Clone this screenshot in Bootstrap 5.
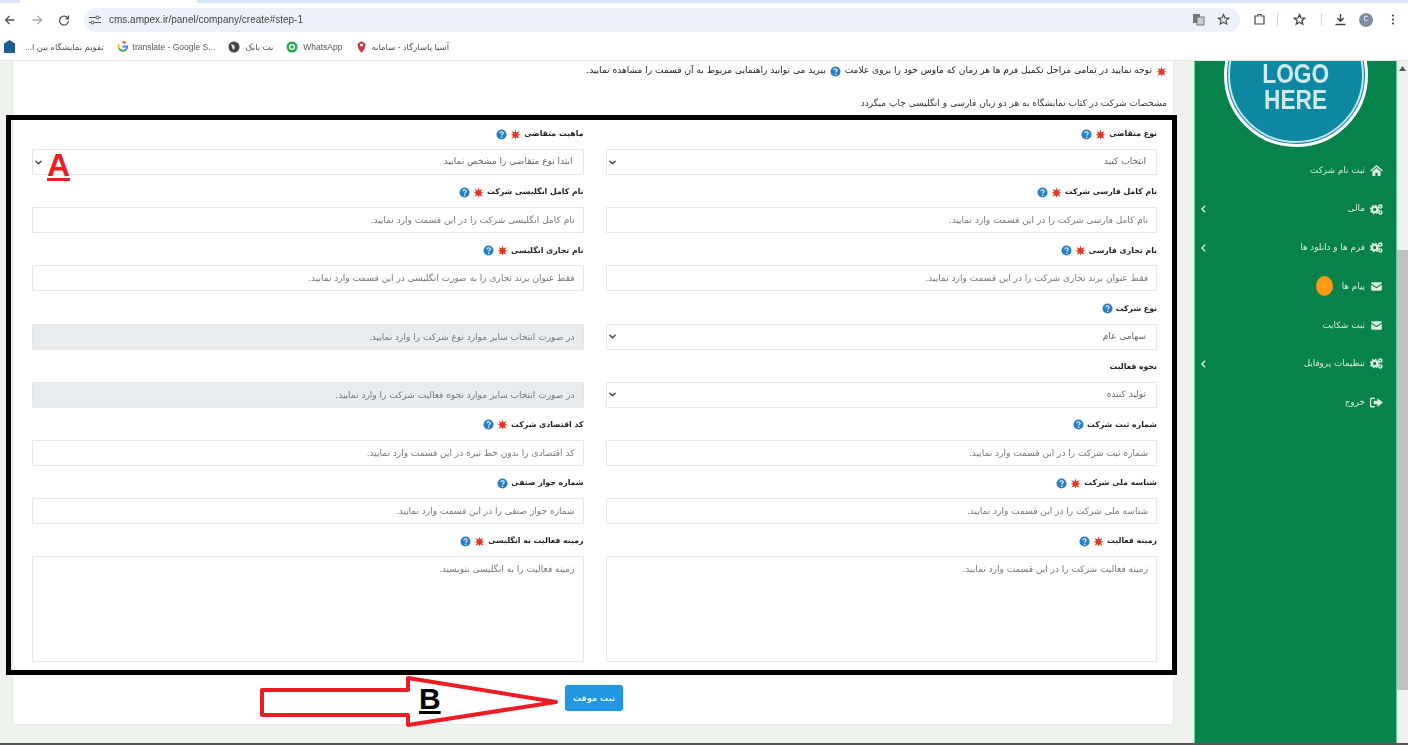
<!DOCTYPE html>
<html lang="fa">
<head>
<meta charset="utf-8">
<title>cms.ampex.ir</title>
<link href="https://cdn.jsdelivr.net/npm/bootstrap@5.3.0/dist/css/bootstrap.min.css" rel="stylesheet">
<style>
html,body{height:745px;overflow:hidden;background:#fff}
body{font-family:"DejaVu Sans","Noto Sans",sans-serif;font-size:9px;position:relative}
.tabstrip{height:3px;margin-bottom:3px;background:#d6e4f8}
.tab-white{width:177px;margin-left:20px;height:3px;background:#fff}
.toolbar{height:27px;padding:0 0 0 4px;background:#fff;color:#555;gap:15px}
.urlbar{flex:none;height:24px;width:1156px;border-radius:12px;background:#edf2fa;margin-left:-1px;padding:0 10px 0 5px;font:10px "Liberation Sans",sans-serif;color:#444}
.toolsep{width:1px;height:13px;background:#d5d5d5}
.bmbar{height:28px;background:#fff;border-bottom:1px solid #e6e6e6;padding:0 4px;font:8.5px "Liberation Sans","DejaVu Sans",sans-serif;color:#555;gap:13px}
.bmitem{gap:5px;white-space:nowrap}
.bmitem:first-child{gap:10px}
.shell{height:684px;background:#eff3ee}
.mainarea{width:1194px;padding-left:12px;padding-right:20px;height:684px}
.sheet{background:#fff;border:1px solid #e8e8e8;border-top:0;height:664px;padding:0 16px 0 19px}
.note1{height:20px;margin-right:-10px;color:#222;font-size:9.05px;white-space:nowrap;overflow:hidden}
.note2{height:45px;margin-right:-10px;color:#333;font-size:9px;padding-top:16px}
.formgrid{--bs-gutter-x:22px;--bs-gutter-y:0}
.fieldbox{height:58.2px}
.fieldbox.tall{height:134px}
.fieldlabel{height:23px;gap:3px;margin:0;padding-bottom:7px;font-weight:700;font-size:7.8px;color:#222}
.fieldctl.form-control,.fieldctl.form-select{height:26px;min-height:26px;border-radius:1px;border:1px solid #e6e6e6;font-size:9px;padding:0 8px;color:#666;text-align:right;background-color:#fff}
.fieldctl.form-control::placeholder{color:#777;opacity:1}
.fieldctl.form-select{--bs-form-select-bg-img:url("data:image/svg+xml,%3csvg xmlns='http://www.w3.org/2000/svg' viewBox='0 0 16 16'%3e%3cpath fill='none' stroke='%23444' stroke-linecap='round' stroke-linejoin='round' stroke-width='3.2' d='m2 5 6 6 6-6'/%3e%3c/svg%3e");background-position:left 1px center;background-size:9px 7px;padding-right:10px}
.fieldctl.form-control:disabled{background:#e9ecef}
textarea.fieldctl.form-control{height:106px;padding-top:6px;resize:none}
.savebtn.btn{width:58px;height:26px;padding:0;font-size:8.2px;font-weight:700;border-radius:3px;background:#2196e3;border:1px solid #2196e3;color:#e8f4fd;margin:18px 0 0 0;box-shadow:0 0 2px #9fc9ea}
.savewrap{padding-right:534px}
.greenside{width:203px;height:684px;background:#07824a;overflow:hidden;border-left:1px solid #5fd09a;border-right:1px solid #5fd09a}
.logocircle{width:144px;height:144px;margin:-58px auto 0;padding-top:24px;border-radius:50%;background:#0e87a3;border:3px solid #fff;outline:2px solid #bfe6ea;outline-offset:-6px;color:#cfe9ee;font:700 27px/26px "Liberation Sans",sans-serif;text-align:center}
.logoword{display:inline-block;transform:scaleX(.84)}
.menulist{padding:4px 13px 0 6px;margin:0;list-style:none;color:#d4ecdf;font-size:8.8px}
.menuline{height:38.7px;gap:5px}
.ordot{width:17px;height:20px;border-radius:50%;background:#f89a12;color:#fff;font-size:7px;margin-right:4px}
.scrolltrack{width:11px;height:684px;background:#f1f1f1;padding-top:5px}
.scrollup{display:block;margin:0 auto}
.scrollthumb{height:440px;margin-top:179px;background:#c1c1c1}
.softpic{filter:blur(.35px)}
.overlaybox{position:absolute;left:6px;top:115px;width:1171px;height:560px;border:5px solid #000;pointer-events:none}
.tag-a{position:absolute;left:47px;top:146px;font:700 32px/38px "Liberation Sans",sans-serif;color:#ed1c24;text-decoration:underline}
.tag-b{position:absolute;left:419px;top:681px;font:700 30px/36px "Liberation Sans",sans-serif;color:#000;text-decoration:underline}
.arrowlay{position:absolute;left:0;top:0;pointer-events:none}
.bottomline{position:absolute;left:0;right:0;bottom:0;height:2px;background:#555}
</style>
</head>
<body>
<svg width="0" height="0" class="d-none">
<symbol id="ic-star" viewBox="0 0 12 12"><path d="M6 .5l1 3.400 3.400-1.600-1.900 3.200 3 .9-3 1 1.900 3.200L7 9l-1 2.500L5 9l-3.400 1.600L3.500 7.400l-3-1 3-.9L1.600 2.300 5 3.900z" fill="#e5341f"/></symbol>
<symbol id="ic-help" viewBox="0 0 12 12"><circle cx="6" cy="6" r="5.500" fill="#2a7fc4"/><path d="M4.200 4.600C4.300 3.500 5 3 6 3s1.800.6 1.800 1.500c0 1.300-1.500 1.300-1.500 2.700" fill="none" stroke="#fff" stroke-width="1.200"/><circle cx="6.200" cy="9" r=".8" fill="#fff"/></symbol>
<symbol id="ic-home" viewBox="0 0 14 12"><path d="M7 0l7 6-1 1-6-5-6 5-1-1zM2.500 7L7 3.200 11.500 7v5H8.300V8.500H5.700V12H2.500z" fill="#dcefe5"/></symbol>
<symbol id="ic-cogs" viewBox="0 0 14 12"><circle cx="5" cy="6" r="3" fill="none" stroke="#dcefe5" stroke-width="2.400"/><circle cx="5" cy="6" r="4.600" fill="none" stroke="#dcefe5" stroke-width="1.300" stroke-dasharray="1.800 1.800"/><circle cx="11.200" cy="2.800" r="1.700" fill="none" stroke="#dcefe5" stroke-width="1.600"/><circle cx="11.200" cy="9.200" r="1.700" fill="none" stroke="#dcefe5" stroke-width="1.600"/></symbol>
<symbol id="ic-mail" viewBox="-1.500 -1 17 13"><path d="M0 1.500C0 .7.700 0 1.500 0h11c.8 0 1.500.7 1.500 1.500L7 6zM0 3.200l7 4.500 7-4.500v6.300c0 .8-.7 1.500-1.500 1.500h-11C.7 11 0 10.300 0 9.500z" fill="#dcefe5"/></symbol>
<symbol id="ic-exit" viewBox="0 0 14 11"><path d="M5 1H2a1.500 1.500 0 0 0-1.500 1.500v6A1.500 1.500 0 0 0 2 10h3" fill="none" stroke="#dcefe5" stroke-width="1.600"/><path d="M8 1l6 4.500L8 10V7.500H4v-4h4z" fill="#dcefe5"/></symbol>
<symbol id="ic-left" viewBox="0 0 6 10"><path d="M5 1L1 5l4 4" fill="none" stroke="#dcefe5" stroke-width="1.800"/></symbol>
</svg>

<div class="tabstrip"><div class="tab-white"></div></div>
<div class="toolbar softpic d-flex align-items-center">
<svg width="12" height="12" viewBox="0 0 12 12"><path d="M10.500 6H2M5.500 2L1.500 6l4 4" fill="none" stroke="#555" stroke-width="1.300"/></svg>
<svg width="12" height="12" viewBox="0 0 12 12"><path d="M1.500 6H10M6.500 2l4 4-4 4" fill="none" stroke="#aaa" stroke-width="1.300"/></svg>
<svg width="12" height="12" viewBox="0 0 12 12"><path d="M10 4.500A4.500 4.500 0 1 0 10.500 7M10.500 1.500v3.300H7.200" fill="none" stroke="#555" stroke-width="1.300"/></svg>
<div class="urlbar d-flex align-items-center">
<svg width="12" height="10" viewBox="0 0 12 10"><path d="M0 2.500h7M10 2.500h2M0 7.500h2M5 7.500h7" stroke="#555" stroke-width="1.200"/><circle cx="8.500" cy="2.500" r="1.500" fill="none" stroke="#555"/><circle cx="3.500" cy="7.500" r="1.500" fill="none" stroke="#555"/></svg>
<span class="ms-2">cms.ampex.ir/panel/company/create#step-1</span>
<svg class="ms-auto" width="13" height="13" viewBox="0 0 13 13"><rect x="1" y="1" width="7" height="9" fill="#777"/><rect x="5" y="4" width="7" height="8" fill="#c8ccd2" stroke="#777"/></svg>
<svg style="margin-left:12px" width="13" height="13" viewBox="0 0 13 13"><path d="M6.500 1.500l1.500 3.400 3.700.3-2.800 2.400.9 3.600-3.300-1.900-3.300 1.900.9-3.600L1.300 5.200l3.700-.3z" fill="none" stroke="#444" stroke-width="1.100"/></svg>
</div>
<svg style="margin-left:-2px" width="13" height="13" viewBox="0 0 13 13"><path d="M2 3h3V1.500h3V3h3v8H2z" fill="none" stroke="#444" stroke-width="1.200"/></svg>
<span class="toolsep" style="margin-left:-4px"></span>
<svg width="13" height="13" viewBox="0 0 13 13"><path d="M6.500 1.500l1.500 3.400 3.700.3-2.800 2.400.9 3.600-3.300-1.900-3.300 1.900.9-3.600L1.300 5.200l3.700-.3z" fill="none" stroke="#444" stroke-width="1.300"/></svg>
<span class="toolsep"></span>
<svg style="margin-left:-3px" width="13" height="13" viewBox="0 0 13 13"><path d="M6.500 1v7M3.300 5l3.200 3.200L9.700 5M1.500 11.500h10" fill="none" stroke="#444" stroke-width="1.400"/></svg>
<span class="rounded-circle d-flex align-items-center justify-content-center text-white" style="width:14px;height:14px;margin-left:-3px;background:#7d8fa3;font-size:7px">C</span>
<svg width="10" height="13" viewBox="0 0 10 13"><circle cx="5" cy="2.500" r="1.100" fill="#444"/><circle cx="5" cy="6.500" r="1.100" fill="#444"/><circle cx="5" cy="10.500" r="1.100" fill="#444"/></svg>
</div>
<div class="bmbar softpic d-flex align-items-center" dir="ltr">
<span class="bmitem d-flex align-items-center"><svg width="11" height="13" viewBox="0 0 11 13"><path d="M5.500 0L11 3.500V13H0V3.500z" fill="#1c5f96"/></svg><span dir="rtl">تقویم نمایشگاه بین ا...</span></span>
<span class="bmitem d-flex align-items-center"><svg width="11" height="11" viewBox="0 0 11 11"><path d="M5.500 1a4.500 4.500 0 0 1 3 1.200" fill="none" stroke="#ea4335" stroke-width="2"/><path d="M2 3.500A4.500 4.500 0 0 0 2 7.500" fill="none" stroke="#fbbc05" stroke-width="2"/><path d="M2 7.500a4.500 4.500 0 0 0 7 1" fill="none" stroke="#34a853" stroke-width="2"/><path d="M5.500 5.500H10A4.500 4.500 0 0 1 9 8.500" fill="none" stroke="#4285f4" stroke-width="2"/></svg><span>translate - Google S...</span></span>
<span class="bmitem d-flex align-items-center"><svg width="12" height="12" viewBox="0 0 12 12"><circle cx="6" cy="6" r="5.500" fill="#444"/><path d="M3 3l3 1 1 3-2 2-1-3z" fill="#ddd"/></svg><span dir="rtl">نت بانک</span></span>
<span class="bmitem d-flex align-items-center"><svg width="12" height="12" viewBox="0 0 12 12"><circle cx="6" cy="6" r="5.500" fill="#1fae4e"/><circle cx="6" cy="6" r="3" fill="#fff"/><circle cx="6" cy="6" r="1.700" fill="#1fae4e"/></svg><span>WhatsApp</span></span>
<span class="bmitem d-flex align-items-center"><svg width="11" height="12" viewBox="0 0 11 12"><path d="M5.500 0l4 3-1 5-3 4-3-4-1-5z" fill="#d2323a"/><circle cx="5.500" cy="4" r="1.500" fill="#fff"/></svg><span dir="rtl">آسیا پاسارگاد - سامانه</span></span>
</div>

<div class="shell d-flex">
<div class="mainarea">
<div class="sheet softpic" dir="rtl">
<div class="note1 d-flex align-items-center gap-1"><svg width="11" height="11"><use href="#ic-star"/></svg><span>توجه نمایید در تمامی مراحل تکمیل فرم ها هر زمان که ماوس خود را بروی علامت</span><svg width="11" height="11"><use href="#ic-help"/></svg><span>ببرید می توانید راهنمایی مربوط به آن قسمت را مشاهده نمایید.</span></div>
<div class="note2">مشخصات شرکت در کتاب نمایشگاه به هر دو زبان فارسی و انگلیسی چاپ میگردد</div>
<div class="row formgrid">
<div class="col-6 fieldbox"><label class="fieldlabel d-flex align-items-center">نوع متقاضی <svg width="11" height="11"><use href="#ic-star"/></svg><svg width="11" height="11"><use href="#ic-help"/></svg></label><select class="form-select fieldctl"><option>انتخاب کنید</option></select></div>
<div class="col-6 fieldbox"><label class="fieldlabel d-flex align-items-center">ماهیت متقاضی <svg width="11" height="11"><use href="#ic-star"/></svg><svg width="11" height="11"><use href="#ic-help"/></svg></label><select class="form-select fieldctl"><option>ابتدا نوع متقاضی را مشخص نمایید</option></select></div>

<div class="col-6 fieldbox"><label class="fieldlabel d-flex align-items-center">نام کامل فارسی شرکت <svg width="11" height="11"><use href="#ic-star"/></svg><svg width="11" height="11"><use href="#ic-help"/></svg></label><input class="form-control fieldctl" placeholder="نام کامل فارسی شرکت را در این قسمت وارد نمایید."></div>
<div class="col-6 fieldbox"><label class="fieldlabel d-flex align-items-center">نام کامل انگلیسی شرکت <svg width="11" height="11"><use href="#ic-star"/></svg><svg width="11" height="11"><use href="#ic-help"/></svg></label><input class="form-control fieldctl" placeholder="نام کامل انگلیسی شرکت را در این قسمت وارد نمایید."></div>

<div class="col-6 fieldbox"><label class="fieldlabel d-flex align-items-center">نام تجاری فارسی <svg width="11" height="11"><use href="#ic-star"/></svg><svg width="11" height="11"><use href="#ic-help"/></svg></label><input class="form-control fieldctl" placeholder="فقط عنوان برند تجاری شرکت را در این قسمت وارد نمایید."></div>
<div class="col-6 fieldbox"><label class="fieldlabel d-flex align-items-center">نام تجاری انگلیسی <svg width="11" height="11"><use href="#ic-star"/></svg><svg width="11" height="11"><use href="#ic-help"/></svg></label><input class="form-control fieldctl" placeholder="فقط عنوان برند تجاری را به صورت انگلیسی در این قسمت وارد نمایید."></div>

<div class="col-6 fieldbox"><label class="fieldlabel d-flex align-items-center">نوع شرکت <svg width="11" height="11"><use href="#ic-help"/></svg></label><select class="form-select fieldctl"><option>سهامی عام</option></select></div>
<div class="col-6 fieldbox"><div class="fieldlabel"></div><input class="form-control fieldctl" disabled placeholder="در صورت انتخاب سایر موارد نوع شرکت را وارد نمایید."></div>

<div class="col-6 fieldbox"><label class="fieldlabel d-flex align-items-center">نحوه فعالیت</label><select class="form-select fieldctl"><option>تولید کننده</option></select></div>
<div class="col-6 fieldbox"><div class="fieldlabel"></div><input class="form-control fieldctl" disabled placeholder="در صورت انتخاب سایر موارد نحوه فعالیت شرکت را وارد نمایید."></div>

<div class="col-6 fieldbox"><label class="fieldlabel d-flex align-items-center">شماره ثبت شرکت <svg width="11" height="11"><use href="#ic-help"/></svg></label><input class="form-control fieldctl" placeholder="شماره ثبت شرکت را در این قسمت وارد نمایید."></div>
<div class="col-6 fieldbox"><label class="fieldlabel d-flex align-items-center">کد اقتصادی شرکت <svg width="11" height="11"><use href="#ic-star"/></svg><svg width="11" height="11"><use href="#ic-help"/></svg></label><input class="form-control fieldctl" placeholder="کد اقتصادی را بدون خط تیره در این قسمت وارد نمایید."></div>

<div class="col-6 fieldbox"><label class="fieldlabel d-flex align-items-center">شناسه ملی شرکت <svg width="11" height="11"><use href="#ic-star"/></svg><svg width="11" height="11"><use href="#ic-help"/></svg></label><input class="form-control fieldctl" placeholder="شناسه ملی شرکت را در این قسمت وارد نمایید."></div>
<div class="col-6 fieldbox"><label class="fieldlabel d-flex align-items-center">شماره جواز صنفی <svg width="11" height="11"><use href="#ic-help"/></svg></label><input class="form-control fieldctl" placeholder="شماره جواز صنفی را در این قسمت وارد نمایید."></div>

<div class="col-6 fieldbox tall"><label class="fieldlabel d-flex align-items-center">زمینه فعالیت <svg width="11" height="11"><use href="#ic-star"/></svg><svg width="11" height="11"><use href="#ic-help"/></svg></label><textarea class="form-control fieldctl" placeholder="زمینه فعالیت شرکت را در این قسمت وارد نمایید."></textarea></div>
<div class="col-6 fieldbox tall"><label class="fieldlabel d-flex align-items-center">زمینه فعالیت به انگلیسی <svg width="11" height="11"><use href="#ic-star"/></svg><svg width="11" height="11"><use href="#ic-help"/></svg></label><textarea class="form-control fieldctl" placeholder="زمینه فعالیت را به انگلیسی بنویسید."></textarea></div>
</div>
<div class="savewrap d-flex"><button type="button" class="btn savebtn">ثبت موقت</button></div>
</div>
</div>
<aside class="greenside softpic" dir="rtl">
<div class="logocircle d-flex flex-column justify-content-center align-items-center" dir="ltr"><span class="logoword">LOGO</span><span class="logoword">HERE</span></div>
<ul class="menulist">
<li class="menuline d-flex align-items-center"><svg width="13" height="11"><use href="#ic-home"/></svg><span>ثبت نام شرکت</span></li>
<li class="menuline d-flex align-items-center"><svg width="13" height="11"><use href="#ic-cogs"/></svg><span>مالی</span><svg class="me-auto" width="5" height="8"><use href="#ic-left"/></svg></li>
<li class="menuline d-flex align-items-center"><svg width="13" height="11"><use href="#ic-cogs"/></svg><span>فرم ها و دانلود ها</span><svg class="me-auto" width="5" height="8"><use href="#ic-left"/></svg></li>
<li class="menuline d-flex align-items-center"><svg width="13" height="11"><use href="#ic-mail"/></svg><span>پیام ها</span><span class="ordot d-flex align-items-center justify-content-center">۰</span></li>
<li class="menuline d-flex align-items-center"><svg width="13" height="11"><use href="#ic-mail"/></svg><span>ثبت شکایت</span></li>
<li class="menuline d-flex align-items-center"><svg width="13" height="11"><use href="#ic-cogs"/></svg><span>تنظیمات پروفایل</span><svg class="me-auto" width="5" height="8"><use href="#ic-left"/></svg></li>
<li class="menuline d-flex align-items-center"><svg width="13" height="11"><use href="#ic-exit"/></svg><span>خروج</span></li>
</ul>
</aside>
<div class="scrolltrack"><svg class="scrollup" width="7" height="5" viewBox="0 0 7 5"><path d="M3.500 0L7 5H0z" fill="#555"/></svg><div class="scrollthumb"></div></div>
</div>

<div class="overlaybox"></div>
<span class="tag-a">A</span>
<svg class="arrowlay" width="1408" height="745"><polygon points="262,690 408,690 408,678 556,702 408,725 408,715 262,715" fill="none" stroke="#ed1c24" stroke-width="4" stroke-linejoin="round"/></svg>
<span class="tag-b">B</span>
<div class="bottomline"></div>
</body>
</html>
